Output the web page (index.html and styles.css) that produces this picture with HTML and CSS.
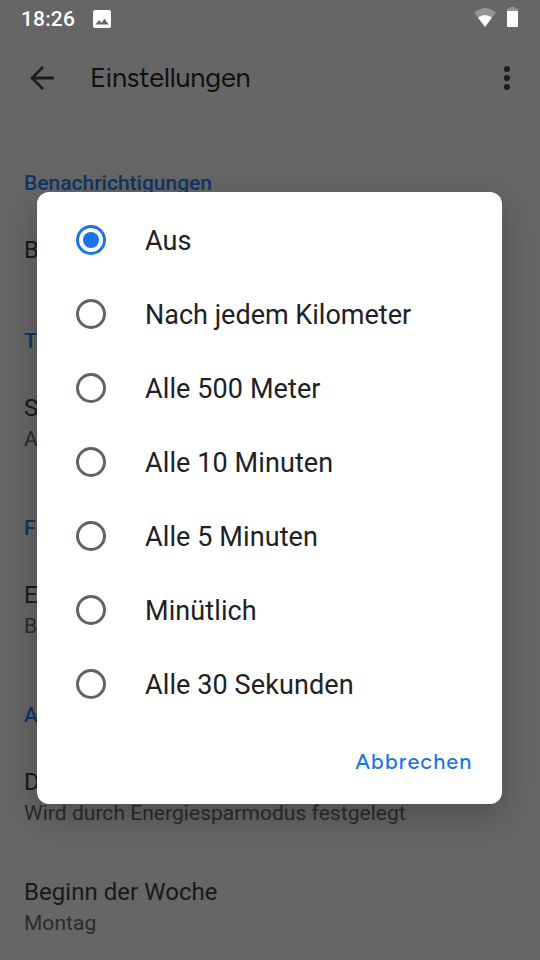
FILE: index.html
```html
<!DOCTYPE html>
<html lang="de">
<head>
<meta charset="utf-8">
<title>Einstellungen</title>
<link rel="stylesheet" href="styles.css">
</head>
<body>
<div class="screen">
  <main class="page">
    <header class="toolbar">
      <svg class="back" viewBox="0 0 36 36"><path d="M30 18H8M19 7 8 18l11 11" fill="none" stroke="#46484b" stroke-width="2.800"/></svg>
      <h1 class="title">Einstellungen</h1>
      <svg class="more" viewBox="0 0 36 36" fill="#46484b"><circle cx="18" cy="9" r="3.1"/><circle cx="18" cy="18" r="3.1"/><circle cx="18" cy="27" r="3.1"/></svg>
    </header>
    <section class="group">
      <h2 class="category">Benachrichtigungen</h2>
      <div class="pref single"><div class="name">B</div></div>
    </section>
    <section class="group">
      <h2 class="category">T</h2>
      <div class="pref"><div class="name">S</div><div class="summary">A</div></div>
    </section>
    <section class="group">
      <h2 class="category">F</h2>
      <div class="pref"><div class="name">E</div><div class="summary">B</div></div>
    </section>
    <section class="group">
      <h2 class="category">A</h2>
      <div class="pref"><div class="name">D</div><div class="summary">Wird durch Energiesparmodus festgelegt</div></div>
      <div class="pref"><div class="name">Beginn der Woche</div><div class="summary">Montag</div></div>
    </section>
  </main>
  <div class="scrim">
    <div class="dialog" role="dialog">
      <div class="options">
        <div class="option"><span class="radio checked"></span><span class="label">Aus</span></div>
        <div class="option"><span class="radio"></span><span class="label tight">Nach jedem Kilometer</span></div>
        <div class="option"><span class="radio"></span><span class="label">Alle 500 Meter</span></div>
        <div class="option"><span class="radio"></span><span class="label">Alle 10 Minuten</span></div>
        <div class="option"><span class="radio"></span><span class="label">Alle 5 Minuten</span></div>
        <div class="option"><span class="radio"></span><span class="label">Minütlich</span></div>
        <div class="option"><span class="radio"></span><span class="label">Alle 30 Sekunden</span></div>
      </div>
      <div class="actions"><span class="cancel">Abbrechen</span></div>
    </div>
  </div>
  <div class="statusbar">
    <span class="clock">18:26</span>
    <svg class="photo" viewBox="0 0 18 18"><path fill="#fff" fill-rule="evenodd" d="M2 0h14a2 2 0 0 1 2 2v14a2 2 0 0 1-2 2H2a2 2 0 0 1-2-2V2a2 2 0 0 1 2-2zM2.500 14.500h13L11.500 8.700 8.500 12.700 6.200 10z"/></svg>
    <svg class="wifi" viewBox="0 0 22 19"><path fill="#fff" fill-opacity=".3" d="M0 4.500Q11-4.500 22 4.500L11 19z"/><path fill="#fff" d="M4 9.500Q11 4.500 18 9.500L11 19z"/></svg>
    <svg class="battery" viewBox="0 0 11 20"><path fill="#fff" fill-opacity=".3" d="M3 0h5v1.500h2a1 1 0 0 1 1 1V4H0V2.500a1 1 0 0 1 1-1h2z"/><path fill="#fff" d="M0 4h11v15a1 1 0 0 1-1 1H1a1 1 0 0 1-1-1z"/></svg>
  </div>
</div>
</body>
</html>
```
FILE: styles.css
```css
* { box-sizing: border-box; }
body { margin: 0; background: #fff; font-family: Roboto, sans-serif; color: #202124; }
h1, h2 { margin: 0; }
svg { display: block; flex: none; }
.screen { position: relative; width: 540px; height: 960px; overflow: hidden; }
.page { padding-top: 36px; }
.toolbar { display: flex; align-items: center; height: 84px; margin-bottom: 13px; padding: 0 15px 0 24px; }
.back, .more { width: 36px; height: 36px; }
.title { flex: 1; margin-left: 30px; font: 400 27px/36px Figtree, Lato, sans-serif; letter-spacing: -0.15px; color: #28292c; }
.category { height: 77px; padding: 35px 24px 11px; font-size: 21px; font-weight: 500; line-height: 31px; color: #2a86ff; }
.pref { height: 110px; padding: 25px 24px 23px; }
.pref.single { height: 81px; }
.name { font-size: 24px; line-height: 31px; letter-spacing: 0.04px; color: #404245; }
.summary { font-size: 21px; line-height: 31px; letter-spacing: 0.04px; color: #6c6f73; }
.scrim { position: absolute; inset: 0; padding: 192px 38px 0 37px; background: rgba(0, 0, 0, 0.6); }
.dialog { height: 612px; padding-top: 11px; border-radius: 12px; background: #fff; box-shadow: 0 12px 36px rgba(0, 0, 0, 0.24); }
.option { display: flex; align-items: center; height: 74px; padding-left: 39px; }
.radio { display: grid; place-items: center; width: 30px; height: 30px; margin-right: 39px; border: 3px solid #5f6368; border-radius: 50%; }
.checked { border-color: #1a73e8; }
.checked::after { content: ""; width: 16px; height: 16px; border-radius: 50%; background: #1a73e8; }
.label { padding-top: 2px; font-size: 27px; line-height: 36px; letter-spacing: 0.1px; }
.label.tight { letter-spacing: 0; }
.actions { display: flex; justify-content: flex-end; padding: 23px 29.5px 0 0; }
.cancel { font: 500 21.5px/36px Figtree, Inter, sans-serif; letter-spacing: 1.15px; color: #1a73e8; }
.statusbar { position: absolute; inset: 0 0 auto; display: flex; align-items: center; height: 36px; padding: 0 22px 0 21px; }
.clock { padding-top: 2px; font-size: 21px; font-weight: 500; line-height: 36px; letter-spacing: 0.15px; color: #fff; }
.photo { width: 18px; height: 18px; margin: 1px 0 0 18px; }
.wifi { width: 22px; height: 19px; margin: 0 0 2px auto; }
.battery { width: 11px; height: 20px; margin: 0 0 2px 11px; }
```
